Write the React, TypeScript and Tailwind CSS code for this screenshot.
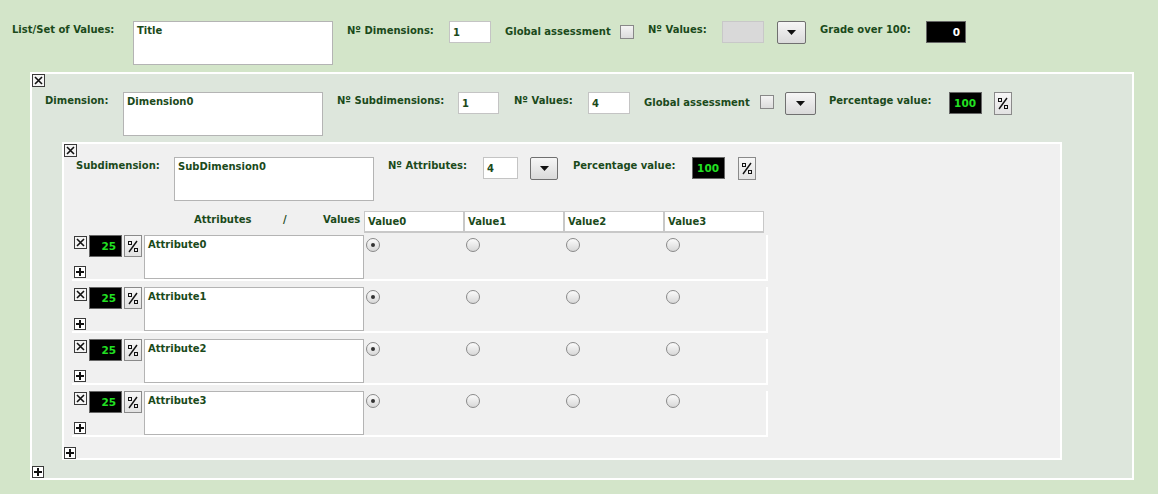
import React from "react";

const lbl = "font-bold text-[10px] leading-[14px] text-[#1b4a1b] whitespace-nowrap";
const val = "font-bold text-[10px] leading-[14px] text-[#1b4a1b]";

function XBtn() {
  return (
    <div className="flex h-[13px] w-[13px] items-center justify-center border border-[#3a3a3a] bg-[#f4f4f4]">
      <svg width="9" height="9" viewBox="0 0 9 9">
        <path d="M1 1L8 8M8 1L1 8" stroke="#111" strokeWidth="1.6" />
      </svg>
    </div>
  );
}

function PlusBtn() {
  return (
    <div className="flex h-[12px] w-[12px] items-center justify-center border border-[#3a3a3a] bg-white">
      <svg width="8" height="8" viewBox="0 0 8 8">
        <path d="M4 0V8M0 4H8" stroke="#111" strokeWidth="2" />
      </svg>
    </div>
  );
}

function PctBtn({ w = "w-[18px]", h = "h-[23px]" }: { w?: string; h?: string }) {
  return (
    <div className={`flex ${w} ${h} items-center justify-center border border-[#8a8a8a] bg-gradient-to-b from-[#f7f7f7] to-[#e2e2e2]`}>
      <svg width="10" height="13" viewBox="0 0 10 13">
        <path d="M1 12L9 1" stroke="#111" strokeWidth="1.4" />
        <rect x="0.5" y="1.5" width="3" height="3" fill="none" stroke="#111" strokeWidth="1" />
        <rect x="6.5" y="8.5" width="3" height="3" fill="none" stroke="#111" strokeWidth="1" />
      </svg>
    </div>
  );
}

function Dropdown({ w, h }: { w: string; h: string }) {
  return (
    <div className={`flex ${w} ${h} items-center justify-center rounded-[2px] border border-[#707070] bg-gradient-to-b from-[#f6f6f6] to-[#dadada]`}>
      <svg width="9" height="5" viewBox="0 0 9 5">
        <path d="M0 0H9L4.5 5Z" fill="#111" />
      </svg>
    </div>
  );
}

function Check() {
  return <div className="h-[14px] w-[14px] border border-[#888] bg-gradient-to-b from-[#f4f4f4] to-[#dcdcdc]" />;
}

function Radio({ on }: { on?: boolean }) {
  return (
    <div className="flex h-[14px] w-[14px] items-center justify-center rounded-full border border-[#8a8a8a] bg-gradient-to-b from-[#fbfbfb] to-[#d8d8d8]">
      {on && <div className="h-[4px] w-[4px] rounded-full bg-[#333]" />}
    </div>
  );
}

function Area({ text, w, h }: { text: string; w: string; h: string }) {
  return (
    <div className={`${w} ${h} shrink-0 border border-[#b4b4b4] bg-white px-[3px] pt-[2px] ${val}`}>{text}</div>
  );
}

function Input({ text, w }: { text: string; w: string }) {
  return (
    <div className={`${w} h-[22px] shrink-0 border border-[#c4c4c4] bg-white px-[3px] pt-[4px] ${val}`}>{text}</div>
  );
}

function Black({ text, w, color }: { text: string; w: string; color: string }) {
  return (
    <div className={`${w} h-[22px] shrink-0 border border-[#666] bg-black pr-[5px] text-right font-bold text-[10.5px] leading-[20px] ${color}`}>
      {text}
    </div>
  );
}

function AttrRow({ n }: { n: number }) {
  return (
    <div className="ml-[8px] flex w-[696px] border-b-2 border-r-2 border-white pl-[2px] pr-[2px]">
      <div className="flex h-[44px] w-[15px] flex-col justify-between pt-[1px] pb-[1px]">
        <XBtn />
        <PlusBtn />
      </div>
      <Black text="25" w="w-[33px]" color="text-[#22e022]" />
      <div className="ml-[2px]">
        <PctBtn w="w-[18px]" h="h-[22px]" />
      </div>
      <div className="ml-[2px]">
        <Area text={`Attribute${n}`} w="w-[220px]" h="h-[44px]" />
      </div>
      {[0, 1, 2, 3].map((i) => (
        <div key={i} className="w-[100px] pl-[2px] pt-[3px]">
          <Radio on={i === 0} />
        </div>
      ))}
    </div>
  );
}

export default function App() {
  return (
    <div className="h-[494px] w-full overflow-hidden bg-[#d3e5c9] font-['DejaVu_Sans',sans-serif]">
      {/* top bar */}
      <div className="flex h-[72px] items-start pl-[12px] pt-[21px]">
        <div className={`w-[121px] pt-[2px] ${lbl}`}>List/Set of Values:</div>
        <Area text="Title" w="w-[200px]" h="h-[44px]" />
        <div className={`ml-[14px] w-[102px] pt-[3px] ${lbl}`}>Nº Dimensions:</div>
        <Input text="1" w="w-[42px]" />
        <div className={`ml-[14px] w-[115px] pt-[4px] ${lbl}`}>Global assessment</div>
        <div className="pt-[4px]">
          <Check />
        </div>
        <div className={`ml-[14px] w-[74px] pt-[2px] ${lbl}`}>Nº Values:</div>
        <div className="h-[22px] w-[42px] border border-[#c8c8c8] bg-[#d9d9d9]" />
        <div className="ml-[13px]">
          <Dropdown w="w-[29px]" h="h-[23px]" />
        </div>
        <div className={`ml-[14px] w-[106px] pt-[2px] ${lbl}`}>Grade over 100:</div>
        <Black text="0" w="w-[40px]" color="text-white" />
      </div>

      {/* dimension */}
      <div className="ml-[30px] h-[408px] w-[1104px] border-2 border-white bg-[#dde6dc]">
        <XBtn />
        <div className="mt-[5px] flex items-start pl-[13px]">
          <div className={`w-[78px] pt-[2px] ${lbl}`}>Dimension:</div>
          <Area text="Dimension0" w="w-[200px]" h="h-[44px]" />
          <div className={`ml-[14px] w-[121px] pt-[2px] ${lbl}`}>Nº Subdimensions:</div>
          <Input text="1" w="w-[41px]" />
          <div className={`ml-[15px] w-[74px] pt-[2px] ${lbl}`}>Nº Values:</div>
          <Input text="4" w="w-[42px]" />
          <div className={`ml-[14px] w-[116px] pt-[4px] ${lbl}`}>Global assessment</div>
          <div className="pt-[3px]">
            <Check />
          </div>
          <div className="ml-[11px]">
            <Dropdown w="w-[31px]" h="h-[23px]" />
          </div>
          <div className={`ml-[13px] w-[120px] pt-[2px] ${lbl}`}>Percentage value:</div>
          <Black text="100" w="w-[33px]" color="text-[#22e022]" />
          <div className="ml-[12px]">
            <PctBtn />
          </div>
        </div>

        {/* subdimension */}
        <div className="ml-[30px] mt-[6px] h-[318px] w-[1000px] border-2 border-white bg-[#f0f0f0]">
          <XBtn />
          <div className="flex items-start pl-[12px]">
            <div className={`w-[98px] pt-[2px] ${lbl}`}>Subdimension:</div>
            <Area text="SubDimension0" w="w-[200px]" h="h-[44px]" />
            <div className={`ml-[14px] w-[95px] pt-[2px] ${lbl}`}>Nº Attributes:</div>
            <Input text="4" w="w-[35px]" />
            <div className="ml-[12px]">
              <Dropdown w="w-[28px]" h="h-[23px]" />
            </div>
            <div className={`ml-[15px] w-[119px] pt-[2px] ${lbl}`}>Percentage value:</div>
            <Black text="100" w="w-[33px]" color="text-[#22e022]" />
            <div className="ml-[13px]">
              <PctBtn />
            </div>
          </div>

          <div className="mt-[10px] flex items-start">
            <div className={`ml-[130px] w-[89px] pt-[2px] ${lbl}`}>Attributes</div>
            <div className={`w-[40px] pt-[2px] ${lbl}`}>/</div>
            <div className={`w-[41px] pt-[2px] ${lbl}`}>Values</div>
            {[0, 1, 2, 3].map((i) => (
              <div
                key={i}
                className={`h-[22px] w-[100px] border border-b-2 border-[#c8c8c8] bg-white px-[3px] pt-[3px] ${val}`}
              >
                Value{i}
              </div>
            ))}
          </div>

          <div className="mt-[2px] flex flex-col gap-[6px]">
            {[0, 1, 2, 3].map((n) => (
              <AttrRow key={n} n={n} />
            ))}
          </div>

          <div className="mt-[10px]">
            <PlusBtn />
          </div>
        </div>

        <div className="mt-[6px]">
          <PlusBtn />
        </div>
      </div>
    </div>
  );
}
